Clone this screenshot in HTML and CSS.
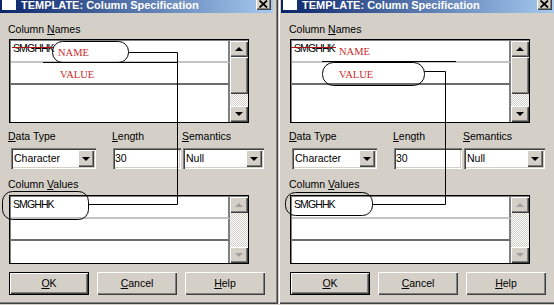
FILE: index.html
```html
<!DOCTYPE html>
<html>
<head>
<meta charset="utf-8">
<link rel="stylesheet" href="styles.css">
</head>
<body>
<div class="screen">

  <div class="dialog">
    <div class="titlebar">
      <span class="appicon"></span>
      <span class="title">TEMPLATE: Column Specification</span>
      <span class="close"><svg width="9" height="8" viewBox="0 0 9 8"><path d="M0.5 0.5 L8 7.5 M8 0.5 L0.5 7.5" stroke="#000" stroke-width="1.8"/></svg></span>
    </div>
    <div class="content">
      <div class="label">Column <u>N</u>ames</div>
      <div class="listbox names">
        <div class="rows">
          <div class="row"><span class="cell">SMGHHK</span></div>
          <div class="row"></div>
          <div class="row"></div>
        </div>
        <div class="vscroll">
          <div class="sbtn"><i class="arr up"></i></div>
          <div class="thumb"></div>
          <div class="track"></div>
          <div class="sbtn"><i class="arr down"></i></div>
        </div>
      </div>
      <div class="fields">
        <div class="field">
          <div class="label"><u>D</u>ata Type</div>
          <div class="combo type"><span class="val">Character</span><span class="dd"><i class="arr down"></i></span></div>
        </div>
        <div class="field">
          <div class="label"><u>L</u>ength</div>
          <div class="edit">30</div>
        </div>
        <div class="field">
          <div class="label"><u>S</u>emantics</div>
          <div class="combo sem"><span class="val">Null</span><span class="dd"><i class="arr down"></i></span></div>
        </div>
      </div>
      <div class="label lbl-values">Column <u>V</u>alues</div>
      <div class="listbox values">
        <div class="rows">
          <div class="row"><span class="cell">SMGHHK</span></div>
          <div class="row"></div>
          <div class="row"></div>
        </div>
        <div class="vscroll">
          <div class="sbtn"><i class="arr up off"></i></div>
          <div class="track"></div>
          <div class="sbtn"><i class="arr down off"></i></div>
        </div>
      </div>
      <div class="buttons">
        <div class="btn default"><span><u>O</u>K</span></div>
        <div class="btn"><span><u>C</u>ancel</span></div>
        <div class="btn"><span><u>H</u>elp</span></div>
      </div>
    </div>
    <svg class="notes" width="278" height="300" viewBox="0 0 278 300">
      <line x1="12" y1="47.5" x2="54" y2="47.5" stroke="#a81818"/>
      <rect x="52.5" y="41.5" width="76" height="21" rx="10" fill="none" stroke="#000"/>
      <text x="58" y="55.5" class="red">NAME</text>
      <path d="M128.5 52.5 H177.5 V204.5 H88" fill="none" stroke="#000"/>
      <line x1="43" y1="62.5" x2="177" y2="62.5" stroke="#000"/>
      <text x="60" y="78" class="red">VALUE</text>
      <rect x="2.5" y="191.5" width="86" height="28" rx="10" fill="none" stroke="#000"/>
    </svg>
  </div>

  <div class="dialog">
    <div class="titlebar">
      <span class="appicon"></span>
      <span class="title">TEMPLATE: Column Specification</span>
      <span class="close"><svg width="9" height="8" viewBox="0 0 9 8"><path d="M0.5 0.5 L8 7.5 M8 0.5 L0.5 7.5" stroke="#000" stroke-width="1.8"/></svg></span>
    </div>
    <div class="content">
      <div class="label">Column <u>N</u>ames</div>
      <div class="listbox names">
        <div class="rows">
          <div class="row"><span class="cell">SMGHHK</span></div>
          <div class="row"></div>
          <div class="row"></div>
        </div>
        <div class="vscroll">
          <div class="sbtn"><i class="arr up"></i></div>
          <div class="thumb"></div>
          <div class="track"></div>
          <div class="sbtn"><i class="arr down"></i></div>
        </div>
      </div>
      <div class="fields">
        <div class="field">
          <div class="label"><u>D</u>ata Type</div>
          <div class="combo type"><span class="val">Character</span><span class="dd"><i class="arr down"></i></span></div>
        </div>
        <div class="field">
          <div class="label"><u>L</u>ength</div>
          <div class="edit">30</div>
        </div>
        <div class="field">
          <div class="label"><u>S</u>emantics</div>
          <div class="combo sem"><span class="val">Null</span><span class="dd"><i class="arr down"></i></span></div>
        </div>
      </div>
      <div class="label lbl-values">Column <u>V</u>alues</div>
      <div class="listbox values">
        <div class="rows">
          <div class="row"><span class="cell">SMGHHK</span></div>
          <div class="row"></div>
          <div class="row"></div>
        </div>
        <div class="vscroll">
          <div class="sbtn"><i class="arr up off"></i></div>
          <div class="track"></div>
          <div class="sbtn"><i class="arr down off"></i></div>
        </div>
      </div>
      <div class="buttons">
        <div class="btn default"><span><u>O</u>K</span></div>
        <div class="btn"><span><u>C</u>ancel</span></div>
        <div class="btn"><span><u>H</u>elp</span></div>
      </div>
    </div>
    <svg class="notes" width="278" height="300" viewBox="0 0 278 300">
      <line x1="10" y1="47.5" x2="55" y2="47.5" stroke="#a81818"/>
      <text x="58" y="55" class="red">NAME</text>
      <line x1="41" y1="61.5" x2="175" y2="61.5" stroke="#000"/>
      <rect x="41.5" y="62.5" width="102" height="23" rx="11" fill="none" stroke="#000"/>
      <text x="58" y="78" class="red">VALUE</text>
      <path d="M143.5 71.5 H164.5 V204.5 H91" fill="none" stroke="#000"/>
      <rect x="4.5" y="192.5" width="87" height="23" rx="10" fill="none" stroke="#000"/>
    </svg>
  </div>

</div>
</body>
</html>
```
FILE: styles.css
```css
* { box-sizing: border-box; }
html, body { margin: 0; padding: 0; }
body {
  width: 554px;
  height: 305px;
  overflow: hidden;
  background: #d4d0c8;
  font-family: "Liberation Sans", Arial, sans-serif;
  font-size: 10.5px;
  color: #000;
}
u { text-decoration: underline; text-underline-offset: 1px; }

.screen {
  display: flex;
  margin-left: -3px;
  margin-top: -8px;
}

.dialog {
  position: relative;
  flex: none;
  width: 281px;
  height: 312px;
  padding: 3px 5px 3px 3px;
  background: #d4d0c8;
  box-shadow: inset 1px 1px #d4d0c8, inset 2px 2px #fff, inset -1px -1px #404040, inset -2px -2px #808080;
}

.titlebar {
  height: 18px;
  display: flex;
  align-items: flex-start;
  padding: 2px 2px 0 2px;
  background: linear-gradient(to right, #0a246a, #a6caf0);
}
.appicon {
  width: 14px;
  height: 13px;
  margin-right: 5px;
  background: #fff;
  flex: none;
}
.title {
  color: #fff;
  font-weight: bold;
  font-size: 11px;
  line-height: 16px;
  white-space: nowrap;
}
.close {
  margin-left: auto;
  width: 15px;
  height: 13px;
  flex: none;
  display: flex;
  align-items: center;
  justify-content: center;
  background: #d4d0c8;
  box-shadow: inset 1px 1px #fff, inset -1px -1px #404040, inset -2px -2px #808080;
}

.content {
  padding-left: 8px;
}
.label {
  height: 13px;
  line-height: 13px;
  white-space: nowrap;
}
.content > .label:first-child { margin-top: 10px; }

.listbox {
  display: flex;
  margin-left: 1px;
  width: 240px;
  border: 1px solid #000;
  background: #808080;
  padding: 1px 0 0 1px;
}
.names { margin-top: 3px; height: 84px; }
.values { margin-top: 4px; height: 69px; }

.rows {
  flex: 1;
  display: flex;
  flex-direction: column;
}
.row {
  height: 22px;
  flex: none;
  background: #fff;
  border-right: 2px solid #808080;
  border-bottom: 2px solid #c4c4c4;
  padding: 1px 0 0 2px;
  line-height: 13px;
}
.cell { letter-spacing: -0.9px; }
.row:nth-child(2) { border-bottom-color: #6c6c6c; }
.row:last-child { flex: 1; border-bottom: 0; }

.vscroll {
  width: 18px;
  flex: none;
  display: flex;
  flex-direction: column;
  background: repeating-conic-gradient(#d4d0c8 0 25%, #ffffff 0 50%) 0 0 / 2px 2px;
}
.sbtn, .thumb {
  background: #d4d0c8;
  box-shadow: inset 1px 1px #fff, inset -1px -1px #404040, inset -2px -2px #808080;
}
.sbtn {
  height: 16px;
  flex: none;
  display: flex;
  align-items: center;
  justify-content: center;
}
.thumb { height: 37px; flex: none; }
.track { flex: 1; }

.arr {
  width: 0;
  height: 0;
  border-left: 4px solid transparent;
  border-right: 4px solid transparent;
}
.arr.up { border-bottom: 4px solid #000; margin-top: -1px; }
.arr.down { border-top: 4px solid #000; }
.arr.up.off { border-bottom-color: #a0a0a0; }
.arr.down.off { border-top-color: #a0a0a0; }

.fields {
  margin-top: 7px;
  display: grid;
  grid-template-columns: 104px 70px 90px;
}
.combo, .edit {
  margin-top: 5px;
  height: 21px;
  background: #fff;
  box-shadow: inset 1px 1px #808080, inset 2px 2px #404040, inset -1px -1px #fff, inset -2px -2px #d4d0c8;
  padding: 2px;
  line-height: 17px;
}
.combo { display: flex; }
.combo .val { flex: 1; padding-left: 1px; }
.combo.type { margin-left: 3px; width: 85px; }
.combo.sem { margin-left: 1px; width: 81px; }
.edit { margin-left: 1px; width: 68px; padding-left: 2px; }
.dd {
  width: 16px;
  height: 17px;
  flex: none;
  display: flex;
  align-items: center;
  justify-content: center;
  background: #d4d0c8;
  box-shadow: inset 1px 1px #fff, inset -1px -1px #404040, inset -2px -2px #808080;
}

.lbl-values { margin-top: 9px; }

.buttons {
  margin-top: 8px;
  margin-left: 1px;
  display: flex;
  gap: 8px;
}
.btn {
  width: 80px;
  height: 23px;
  display: flex;
  align-items: center;
  justify-content: center;
  background: #d4d0c8;
  box-shadow: inset 1px 1px #fff, inset -1px -1px #404040, inset -2px -2px #808080;
  line-height: 13px;
}
.btn.default {
  border: 1px solid #000;
  box-shadow: inset 1px 1px #fff, inset -1px -1px #404040, inset -2px -2px #808080;
}

.notes {
  position: absolute;
  left: 3px;
  top: 8px;
  overflow: visible;
  pointer-events: none;
}
.red {
  font-family: "Liberation Serif", "Times New Roman", serif;
  font-size: 10.5px;
  fill: #cc2a2a;
}
```
